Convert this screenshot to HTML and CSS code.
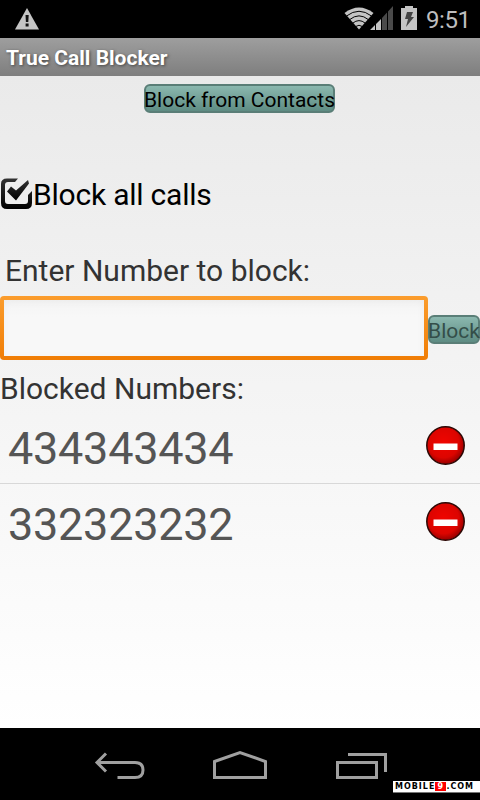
FILE: index.html
```
<!DOCTYPE html>
<html lang="en">
<head>
    <meta charset="UTF-8">
    <meta name="viewport" content="width=device-width, initial-scale=1.0">
    <title>True Call Blocker</title>
    <link rel="stylesheet" href="styles.css">
</head>
<body>
    <div class="screen">
        <div class="statusbar">
            <svg class="warning" width="26" height="24" viewBox="0 0 26 24">
                <path d="M13 0L25 21.500H1Z" fill="#c4c4c4"/>
                <path d="M11.500 7h3.200l-.4 7h-2.400zM11.600 15.500h3v3h-3z" fill="#111"/>
            </svg>
            <svg class="signals" width="76" height="26" viewBox="0 0 76 26">
                <path d="M0.500 8Q15 -3 29.500 8L15 24.500Z" fill="#c4c4c4"/>
                <path d="M2.500 11Q15 1.500 27.500 11M5.500 14.700Q15 7 24.500 14.700M8.700 18.200Q15 13 21.300 18.200M11.700 21.500Q15 19 18.300 21.500" fill="none" stroke="#000" stroke-width="1"/>
                <path d="M26 25L31 20V25ZM32 19L37 14V25H32Z" fill="#c4c4c4"/>
                <path d="M38 13L43 7.500V25H38ZM44 6.500L49 1V25H44Z" fill="#4a4a4a"/>
                <path d="M57 3h4V1h8v2h4v22H57Z" fill="#c4c4c4"/>
                <path d="M63 7h6l-2 5h3l-8 10 2-8h-3z" fill="#444"/>
            </svg>
            <span class="clock">9:51</span>
        </div>
        <h1 class="title">True Call Blocker</h1>
        <div class="content">
            <button class="btn contacts"><span>Block from Contacts</span></button>
            <div class="check">
                <svg width="33" height="32" viewBox="0 0 33 32">
                    <defs>
                        <linearGradient id="ink" x1="0" y1="0" x2="0" y2="1">
                            <stop offset="0" stop-color="#333"/>
                            <stop offset="1" stop-color="#000"/>
                        </linearGradient>
                    </defs>
                    <path d="M7 0.500H18L15 4H8Q5 4 5 7V23Q5 26 8 26H25Q28 26 28 23V17L32 13V25Q32 31 26 31H7Q1 31 1 25V6Q1 0.500 7 0.500Z" fill="url(#ink)"/>
                    <path d="M7 13.500L11 8.500L16 12.500L28 2L29 5.500L16 22.500Z" fill="url(#ink)"/>
                </svg>
                <span>Block all calls</span>
            </div>
            <label class="enter" for="number">Enter Number to block:</label>
            <div class="row">
                <input class="number" type="text" id="number">
                <button class="btn block"><span>Block</span></button>
            </div>
            <div class="heading">Blocked Numbers:</div>
            <ul class="list">
                <li>
                    <span>434343434</span>
                    <svg width="40" height="40" viewBox="0 0 40 40">
                        <defs>
                            <radialGradient id="red" cx=".45" cy=".42" r=".58">
                                <stop offset="0" stop-color="#f00500"/>
                                <stop offset=".7" stop-color="#dc0500"/>
                                <stop offset="1" stop-color="#970000"/>
                            </radialGradient>
                        </defs>
                        <circle cx="19.500" cy="19.500" r="18.700" fill="url(#red)" stroke="#2c0805" stroke-width="1.500"/>
                        <path d="M7.500 17.500h24v6.500h-24z" fill="#fff"/>
                    </svg>
                </li>
                <li>
                    <span>332323232</span>
                    <svg width="40" height="40" viewBox="0 0 40 40">
                        <circle cx="19.500" cy="19.500" r="18.700" fill="url(#red)" stroke="#2c0805" stroke-width="1.500"/>
                        <path d="M7.500 17.500h24v6.500h-24z" fill="#fff"/>
                    </svg>
                </li>
            </ul>
        </div>
        <div class="navbar">
            <svg width="480" height="72" viewBox="0 0 480 72" fill="none" stroke="#a0a0a0" stroke-width="3">
                <path d="M106 25.500L97 34.500L106 43.500M97 34.500H135Q143 34.500 143 42T135 49.500H117.500"/>
                <path d="M214.500 33.500L240 24.500L265.500 33.500V49.500H214.500Z"/>
                <path d="M337.500 34.500H376.500V49.500H337.500ZM348 26.500H385.500V44"/>
            </svg>
            <div class="badge">MOBILE<b>9</b>.COM</div>
        </div>
    </div>
</body>
</html>
```
FILE: styles.css
```
body {
    margin: 0;
    background: #000;
    font-family: Roboto, sans-serif;
}
.screen {
    width: 480px;
    height: 800px;
    display: flex;
    flex-direction: column;
    overflow: hidden;
}
.statusbar {
    height: 38px;
    display: flex;
    align-items: flex-start;
    background: #000;
    box-sizing: border-box;
    padding-left: 14px;
}
.statusbar svg {
    flex: none;
}
.warning {
    margin-top: 8px;
}
.signals {
    margin: 5px 0 0 304px;
}
.clock {
    margin: 5px 0 0 6px;
    font-size: 24px;
    line-height: 30px;
    letter-spacing: -0.4px;
    color: #bebebe;
    white-space: nowrap;
}
.title {
    margin: 0;
    height: 38px;
    line-height: 40px;
    padding-left: 6px;
    font-size: 21px;
    font-weight: bold;
    color: #fff;
    background: linear-gradient(#9e9e9e, #7e7e7e);
    text-shadow: 1px 1px 3px #444;
}
.content {
    height: 652px;
    display: flex;
    flex-direction: column;
    background: linear-gradient(#eaeaea, #fff);
}
.btn {
    display: flex;
    align-items: center;
    justify-content: center;
    box-sizing: border-box;
    height: 29px;
    padding: 0;
    border: 2px solid #5a7e77;
    border-radius: 6px;
    background: linear-gradient(#8bb8af, #5e8c83);
    font-family: Roboto, sans-serif;
    font-size: 21px;
    white-space: nowrap;
    color: #000;
}
.btn span {
    margin-top: 3px;
}
.contacts {
    width: 191px;
    margin: 8px 0 0 144px;
}
.check {
    display: flex;
    height: 36px;
    margin-top: 65px;
    font-size: 30px;
    line-height: 34px;
    letter-spacing: -0.22px;
    color: #000;
}
.enter {
    margin: 39px 0 0 5px;
    font-size: 30px;
    line-height: 36px;
    height: 41px;
    color: #333;
}
.row {
    display: flex;
    align-items: center;
    height: 64px;
    margin-top: 2px;
}
.number {
    width: 428px;
    height: 64px;
    box-sizing: border-box;
    border: 4px solid transparent;
    border-radius: 4px;
    background: linear-gradient(#f4f4f4, #f8f8f8 30%) padding-box, linear-gradient(#fb9d2d, #f07d05) border-box;
    box-shadow: inset 0 2px 8px rgba(0, 0, 0, 0.04);
    outline: none;
    font-size: 30px;
}
.block {
    width: 52px;
    margin-top: 3px;
    color: #344e49;
}
.heading {
    height: 37px;
    margin-top: 11px;
    font-size: 30px;
    line-height: 36px;
    color: #333;
}
.list {
    margin: 0;
    padding: 0;
    list-style: none;
}
.list li {
    display: flex;
    justify-content: space-between;
    align-items: center;
    box-sizing: border-box;
    height: 76px;
    padding: 0 14px 0 8px;
    font-size: 45px;
    letter-spacing: -0.25px;
    color: #555;
}
.list li:first-child {
    border-bottom: 1px solid #d8d8d8;
}
.list span {
    padding-top: 5px;
}
.navbar {
    position: relative;
    height: 72px;
    background: #000;
}
.badge {
    position: absolute;
    right: 0;
    bottom: 7px;
    box-sizing: border-box;
    width: 87px;
    height: 12px;
    padding-left: 2px;
    display: flex;
    background: #fff;
    border-bottom: 1px solid #777;
    color: #000;
    font: bold 8px/11px "DejaVu Sans", sans-serif;
    letter-spacing: 1px;
    white-space: nowrap;
}
.badge b {
    width: 11px;
    height: 9px;
    margin-top: 1px;
    line-height: 9px;
    text-align: center;
    background: #f00;
    color: #fff;
}
```
